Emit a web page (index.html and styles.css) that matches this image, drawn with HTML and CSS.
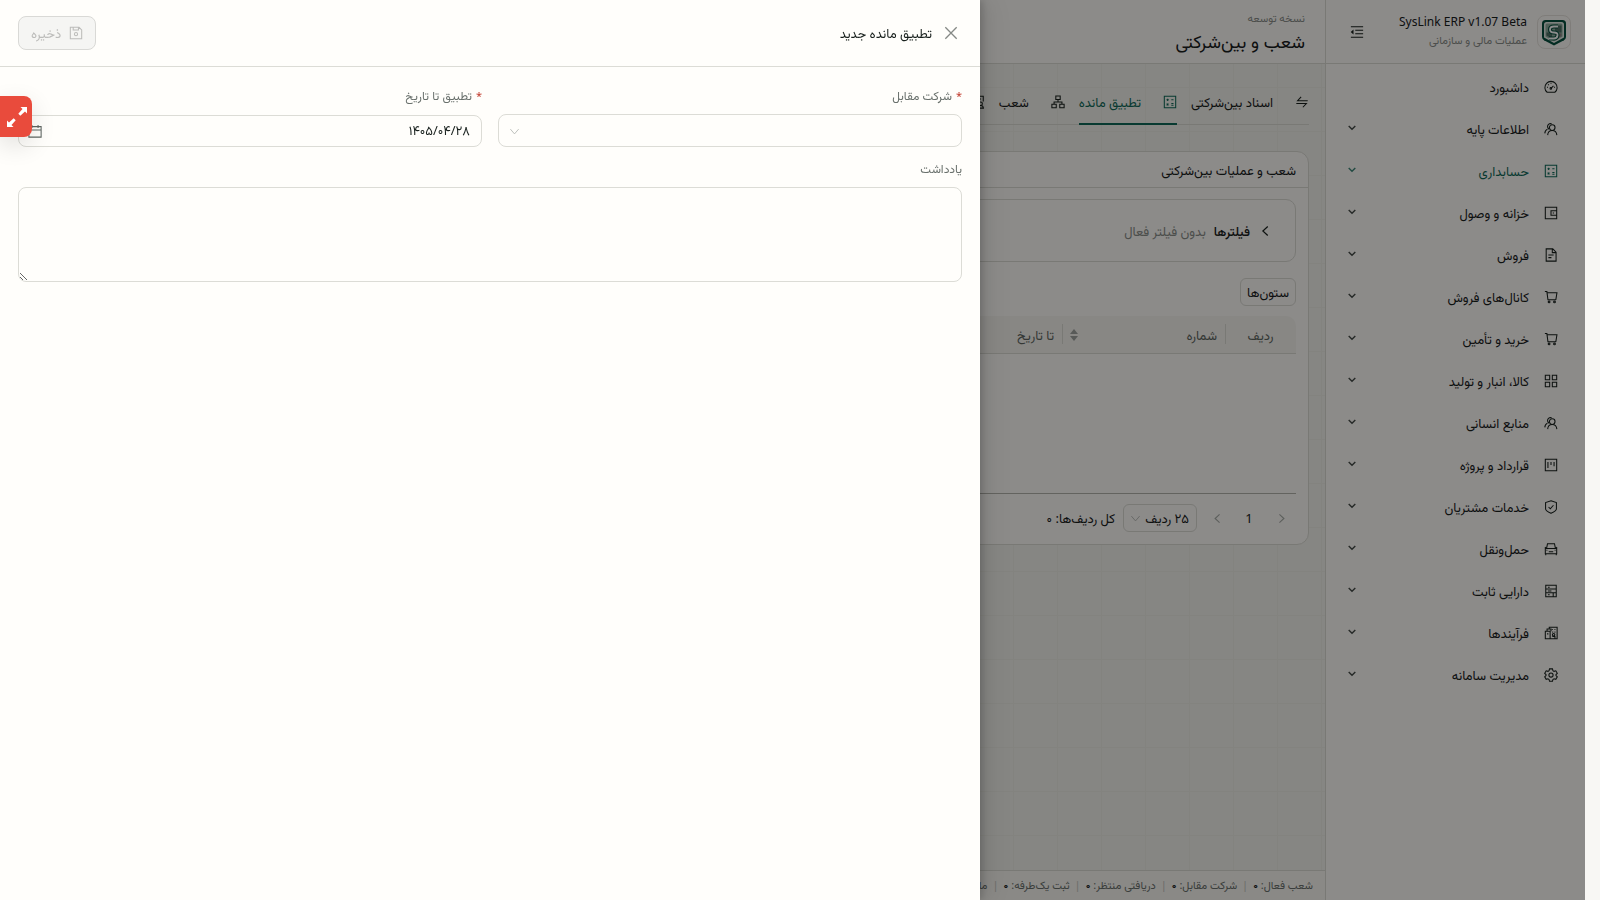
FILE: index.html
```
<!DOCTYPE html>
<html lang="fa" dir="rtl">
<head>
    <meta charset="UTF-8">
    <meta name="viewport" content="width=device-width, initial-scale=1.0">
    <title>شعب و بین‌شرکتی</title>
    <link rel="stylesheet" href="styles.css">
</head>
<body>
    <svg class="sprite" aria-hidden="true">
        <symbol id="i-dashboard" viewBox="0 0 16 16"><path d="M3.600 14a7 7 0 1 1 8.800 0z"/><path d="M8 9.500l2.800-2.800M8 3.200v1.200M3.400 8.300h1.200M11.400 8.300h1.200M4.700 5l.8.8"/><circle cx="7.800" cy="9.600" r=".9"/></symbol>
        <symbol id="i-team" viewBox="0 0 16 16"><circle cx="9.400" cy="6.400" r="3.200"/><path d="M4.200 15c.2-3.200 2-5.300 5.200-5.300s5 2.100 5.300 5.300M6 8.200A3.200 3.200 0 1 1 8.800 2.200M.9 13c.2-2.600 1.200-4.100 3-4.800"/></symbol>
        <symbol id="i-ledger" viewBox="0 0 16 16"><path d="M1.500 1.500h13v13h-13zM4 5.500h2.600M5.300 4.200v2.600M9.500 5.500H12M4.200 9.800l2 2M6.200 9.800l-2 2M9.500 9.800H12M9.500 11.800H12"/></symbol>
        <symbol id="i-wallet" viewBox="0 0 16 16"><path d="M1.500 1.500h13v13h-13zM14.500 5.500H8v5h6.500M10 8h1.500"/></symbol>
        <symbol id="i-file" viewBox="0 0 16 16"><path d="M2.500 1h7.500l3.800 3.800V15H2.500zM9.500 1v4.300h4.300M5 8h6M5 11h3.500"/></symbol>
        <symbol id="i-cart" viewBox="0 0 16 16"><path d="M1 1.800h2.300l1.200 9.400h9M3.500 3.200h11.300l-1.300 8"/><circle cx="5.800" cy="13.600" r="1"/><circle cx="12" cy="13.600" r="1"/></symbol>
        <symbol id="i-grid" viewBox="0 0 16 16"><path d="M1.500 1.500h5v5h-5zM9.500 1.500h5v5h-5zM1.500 9.500h5v5h-5zM9.500 9.500h5v5h-5z"/></symbol>
        <symbol id="i-project" viewBox="0 0 16 16"><path d="M1.500 1.500h13v13h-13zM4.500 4.500v7M8 4.500v3.500M11.500 4.500v5"/></symbol>
        <symbol id="i-shield" viewBox="0 0 16 16"><path d="M8 .9l6.200 2v7.300c0 1.500-3.200 3.600-6.200 5-3-1.400-6.200-3.500-6.200-5V2.900zM5.200 8l2 2 3.600-4"/></symbol>
        <symbol id="i-car" viewBox="0 0 16 16"><path d="M3 7l1-5h8l1 5M1.500 7.500h13v6h-13zM5.500 11.200h5M2.800 9.500h1M12.200 9.500h1M2 13.500V15M14 13.500V15M1 6l1.500 1M15 6l-1.500 1"/></symbol>
        <symbol id="i-asset" viewBox="0 0 16 16"><path d="M2 1.500h12v13H2zM2 5.800h12M2 10h7.500M4.500 3.700h2M4.500 8h4M4.500 12.200h2M9.500 10h4.500M10.500 10v4.500"/></symbol>
        <symbol id="i-building" viewBox="0 0 16 16"><path d="M6 3V1.500h9v13H1.500V6H7v8.500M3.500 6V3.500H8V6M9 4h1M12 4h1M9.500 7h1M12 7h1M9.500 12h3v2M3.500 9h1.500"/><circle cx="11" cy="10" r="1.400"/></symbol>
        <symbol id="i-gear" viewBox="0 0 16 16"><path d="M6.300 1h3.400l.5 2 1.300.8 2-.6 1.700 2.900-1.500 1.400v1.200l1.500 1.300-1.700 2.900-2-.6-1.300.8-.5 2H6.300l-.5-2-1.300-.8-2 .6L.8 10l1.500-1.300V7.500L.8 6.100l1.700-2.900 2 .6L5.800 3z"/><circle cx="8" cy="8" r="2.400"/></symbol>
        <symbol id="i-swap" viewBox="0 0 16 16"><path d="M14.500 6.500H3L7 2.200M1.500 9.700H13l-4 4.300"/></symbol>
        <symbol id="i-branches" viewBox="0 0 16 16"><path d="M5.500 1.200h5v4h-5zM1 10.500h5v4H1zM10 10.500h5v4h-5zM8 5.200v2.800M3.500 10.500V8h9v2.500"/></symbol>
        <symbol id="i-audit" viewBox="0 0 16 16"><path d="M7 14.500H2v-13h12v6M4.500 4.500h7M4.500 7.500h3"/><circle cx="11" cy="10" r="2"/><path d="M7.800 15c.3-2 1.500-3 3.200-3s3 1 3.200 3z"/></symbol>
        <symbol id="i-down" viewBox="0 0 16 16"><path d="M2 4.500l6 7 6-7"/></symbol>
        <symbol id="i-arrow" viewBox="0 0 8 6"><path d="M.7 1L4 4.300 7.300 1"/></symbol>
        <symbol id="i-prev" viewBox="0 0 16 16"><path d="M11 2L4.500 8l6.500 6"/></symbol>
        <symbol id="i-next" viewBox="0 0 16 16"><path d="M5 2l6.500 6L5 14"/></symbol>
        <symbol id="i-close" viewBox="0 0 16 16"><path d="M1.500 1.500l13 13M14.500 1.500l-13 13"/></symbol>
        <symbol id="i-save" viewBox="0 0 16 16"><path d="M1.500 1.500h10l3 3v10h-13zM4.800 1.500v3h6v-3"/><circle cx="8" cy="9.300" r="1.800"/></symbol>
        <symbol id="i-calendar" viewBox="0 0 16 16"><path d="M1 3h14v12H1zM1 6.800h14M4.500 1v3.600M11.500 1v3.600"/></symbol>
        <symbol id="i-fold" viewBox="0 0 16 16"><path d="M1 2h14M6 6h9M6 10h9M1 14h14"/><path class="solid" d="M4 5.200v5.600L.8 8z"/></symbol>
    </svg>

    <div class="app">
        <aside class="sidebar">
            <div class="brand">
                <span class="brand-logo">
                    <svg viewBox="0 0 32 32" width="32" height="32">
                        <path d="M7.500 4h17q3.500 0 3.500 3.500V21q0 2-2 3.200L16 29.500 6 24.200Q4 23 4 21V7.500Q4 4 7.500 4z" fill="#07503f"/>
                        <path d="M8.500 6h15q2.500 0 2.500 2.500v13L16 27 6 21.500v-13Q6 6 8.500 6z" fill="#e6ebe6"/>
                        <path d="M9 7.500h14q1.500 0 1.500 1.500v11.500L16 25.300l-8.500-4.800V9Q7.500 7.500 9 7.500z" fill="#8fae9f"/>
                        <path d="M17 9.500h6.500v7H17zM8.500 16.500H14v6l-5.500-3z" fill="#4e7065"/>
                        <path d="M17 17.500h6.500V20L17 24z" fill="#8c8080"/>
                        <path d="M20 10.500h-4q-4 0-4 3t4 3 3.500 3-3.500 3h-5" fill="none" stroke="#07503f" stroke-width="4"/>
                        <path d="M20 10.500h-4q-4 0-4 3t4 3 3.500 3-3.500 3h-5" fill="none" stroke="#ffffff" stroke-width="1.800"/>
                    </svg>
                </span>
                <div class="brand-text">
                    <strong>SysLink ERP v1.07 Beta</strong>
                    <small>عملیات مالی و سازمانی</small>
                </div>
                <button class="icon-btn" type="button" aria-label="جمع کردن منو"><svg class="icon"><use href="#i-fold"/></svg></button>
            </div>
            <nav class="menu">
                <a href="#"><svg class="icon"><use href="#i-dashboard"/></svg><span>داشبورد</span></a>
                <a href="#"><svg class="icon"><use href="#i-team"/></svg><span>اطلاعات پایه</span><svg class="arrow"><use href="#i-arrow"/></svg></a>
                <a href="#" class="active"><svg class="icon"><use href="#i-ledger"/></svg><span>حسابداری</span><svg class="arrow"><use href="#i-arrow"/></svg></a>
                <a href="#"><svg class="icon"><use href="#i-wallet"/></svg><span>خزانه و وصول</span><svg class="arrow"><use href="#i-arrow"/></svg></a>
                <a href="#"><svg class="icon"><use href="#i-file"/></svg><span>فروش</span><svg class="arrow"><use href="#i-arrow"/></svg></a>
                <a href="#"><svg class="icon"><use href="#i-cart"/></svg><span>کانال‌های فروش</span><svg class="arrow"><use href="#i-arrow"/></svg></a>
                <a href="#"><svg class="icon"><use href="#i-cart"/></svg><span>خرید و تأمین</span><svg class="arrow"><use href="#i-arrow"/></svg></a>
                <a href="#"><svg class="icon"><use href="#i-grid"/></svg><span>کالا، انبار و تولید</span><svg class="arrow"><use href="#i-arrow"/></svg></a>
                <a href="#"><svg class="icon"><use href="#i-team"/></svg><span>منابع انسانی</span><svg class="arrow"><use href="#i-arrow"/></svg></a>
                <a href="#"><svg class="icon"><use href="#i-project"/></svg><span>قرارداد و پروژه</span><svg class="arrow"><use href="#i-arrow"/></svg></a>
                <a href="#"><svg class="icon"><use href="#i-shield"/></svg><span>خدمات مشتریان</span><svg class="arrow"><use href="#i-arrow"/></svg></a>
                <a href="#"><svg class="icon"><use href="#i-car"/></svg><span>حمل‌ونقل</span><svg class="arrow"><use href="#i-arrow"/></svg></a>
                <a href="#"><svg class="icon"><use href="#i-asset"/></svg><span>دارایی ثابت</span><svg class="arrow"><use href="#i-arrow"/></svg></a>
                <a href="#"><svg class="icon"><use href="#i-building"/></svg><span>فرآیندها</span><svg class="arrow"><use href="#i-arrow"/></svg></a>
                <a href="#"><svg class="icon"><use href="#i-gear"/></svg><span>مدیریت سامانه</span><svg class="arrow"><use href="#i-arrow"/></svg></a>
            </nav>
        </aside>

        <div class="main">
            <header class="topbar">
                <small>نسخه توسعه</small>
                <h1>شعب و بین‌شرکتی</h1>
            </header>

            <main class="content">
                <nav class="tabs">
                    <a href="#"><svg class="icon"><use href="#i-swap"/></svg><span>اسناد بین‌شرکتی</span></a>
                    <a href="#" class="active"><svg class="icon"><use href="#i-ledger"/></svg><span>تطبیق مانده</span></a>
                    <a href="#"><svg class="icon"><use href="#i-branches"/></svg><span>شعب</span></a>
                    <a href="#" aria-label="مانده"><svg class="icon"><use href="#i-audit"/></svg></a>
                </nav>

                <section class="card">
                    <h2>شعب و عملیات بین‌شرکتی</h2>
                    <div class="card-body">
                        <div class="filters">
                            <svg class="icon"><use href="#i-prev"/></svg>
                            <strong>فیلترها</strong>
                            <span>بدون فیلتر فعال</span>
                        </div>
                        <button class="btn-small" type="button">ستون‌ها</button>
                        <table class="grid">
                            <colgroup>
                                <col class="col-row">
                                <col class="col-number">
                                <col>
                            </colgroup>
                            <thead>
                                <tr>
                                    <th class="center">ردیف</th>
                                    <th><span class="th-inner">شماره<svg class="sorter" viewBox="0 0 8 14"><path d="M4 1l4 5H0zM4 13L0 8h8z"/></svg></span></th>
                                    <th>تا تاریخ</th>
                                </tr>
                            </thead>
                            <tbody>
                                <tr><td colspan="3"></td></tr>
                            </tbody>
                        </table>
                        <div class="pagination">
                            <button type="button" aria-label="صفحه قبل" disabled><svg class="icon"><use href="#i-next"/></svg></button>
                            <button type="button">1</button>
                            <button type="button" aria-label="صفحه بعد" disabled><svg class="icon"><use href="#i-prev"/></svg></button>
                            <div class="select-wrap page-size">
                                <select aria-label="تعداد ردیف">
                                    <option>۲۵ ردیف</option>
                                </select>
                                <svg class="caret"><use href="#i-down"/></svg>
                            </div>
                            <span>کل ردیف‌ها: ۰</span>
                        </div>
                    </div>
                </section>
            </main>

            <footer class="statusbar">
                <span>شعب فعال: <b>۰</b></span>
                <span>شرکت مقابل: <b>۰</b></span>
                <span>دریافتی منتظر: <b>۰</b></span>
                <span>ثبت یک‌طرفه: <b>۰</b></span>
                <span>مانده: <b>۰</b></span>
            </footer>
        </div>
        <div class="mask"></div>
    </div>

    <div class="drawer" role="dialog" aria-labelledby="drawerTitle">
        <header class="drawer-header">
            <button class="icon-btn" type="button" aria-label="بستن"><svg class="icon"><use href="#i-close"/></svg></button>
            <h2 id="drawerTitle">تطبیق مانده جدید</h2>
            <button class="btn-save" type="button" disabled><svg class="icon"><use href="#i-save"/></svg>ذخیره</button>
        </header>
        <form class="drawer-body">
            <div class="form-row">
                <div class="field">
                    <label class="required" for="company">شرکت مقابل</label>
                    <div class="select-wrap">
                        <select id="company">
                            <option value=""></option>
                        </select>
                        <svg class="caret"><use href="#i-down"/></svg>
                    </div>
                </div>
                <div class="field">
                    <label class="required" for="untilDate">تطبیق تا تاریخ</label>
                    <div class="date-box">
                        <input type="text" id="untilDate" value="۱۴۰۵/۰۴/۲۸">
                        <svg class="icon"><use href="#i-calendar"/></svg>
                    </div>
                </div>
            </div>
            <div class="field">
                <label for="note">یادداشت</label>
                <textarea id="note"></textarea>
            </div>
        </form>
    </div>

    <button class="expand-btn" type="button" aria-label="تمام صفحه">
        <svg viewBox="0 0 20 20" width="20" height="20"><path d="M13.500 0H20v6.500l-2-2-4.700 4.300-2-2L15.500 2zM0 13.500l2 2 4.700-4.300 2 2L4.500 18l2 2H0z"/></svg>
    </button>
</body>
</html>
```
FILE: styles.css
```
* {
    box-sizing: border-box;
}
body {
    margin: 0;
    padding-right: 15px;
    background: #f8f7f4;
    color: #18201d;
    font-family: "Noto Sans", Vazirmatn, sans-serif;
    font-size: 13px;
    line-height: 20px;
}
button, input, select, textarea {
    font: inherit;
    color: inherit;
}
a {
    color: inherit;
    text-decoration: none;
}
h1, h2, strong, b {
    margin: 0;
    font-weight: 400;
}
.sprite {
    position: absolute;
    width: 0;
    height: 0;
}
.icon, .arrow, .caret, .sprite {
    fill: none;
    stroke: currentColor;
    stroke-width: 1.2;
}
.icon {
    width: 14px;
    height: 14px;
    flex: none;
}
.solid {
    fill: currentColor;
    stroke: none;
}
.icon-btn {
    display: flex;
    padding: 0;
    border: 0;
    background: none;
}

/* app shell */
.app {
    position: relative;
    display: flex;
    height: 100vh;
    overflow: hidden;
}
.mask {
    position: absolute;
    inset: 0;
    background: rgba(0, 0, 0, 0.45);
}
.sidebar {
    flex: none;
    width: 260px;
    background: #fffdf9;
    border-left: 1px solid #dcdcd6;
}
.brand {
    display: flex;
    align-items: center;
    gap: 10px;
    height: 64px;
    padding: 0 14px 0 24px;
    border-bottom: 1px solid #dcdcd6;
}
.brand-logo {
    display: flex;
    border: 1px solid #e8e4de;
    border-radius: 8px;
}
.brand-text {
    display: flex;
    flex: 1;
    flex-direction: column;
    padding-bottom: 2px;
}
.brand-text strong {
    font-size: 12px;
    line-height: 18px;
    text-align: right;
}
.brand-text small, .topbar small {
    color: #8a8e8a;
    font-size: 11px;
    line-height: 18px;
}
.menu {
    padding-top: 2px;
}
.menu a {
    display: flex;
    align-items: center;
    gap: 15px;
    height: 42px;
    padding: 0 27px 0 22px;
}
.menu span {
    flex: 1;
}
.menu .active, .tabs .active {
    color: #0f6b5a;
}
.arrow {
    width: 8px;
    height: 6px;
    margin-bottom: 3px;
    stroke-width: 1.4;
    opacity: 0.8;
}

/* main column */
.main {
    display: flex;
    flex: 1;
    flex-direction: column;
    min-width: 0;
}
.topbar {
    display: flex;
    flex-direction: column;
    justify-content: center;
    height: 64px;
    padding: 0 20px;
    background: #fffdf9;
    border-bottom: 1px solid #dcdcd6;
}
.topbar h1 {
    font-size: 18px;
    line-height: 28px;
}
.content {
    flex: 1;
    padding: 16px;
    background-color: #f5f4ee;
    background-image:
        linear-gradient(90deg, #efeee8 1px, transparent 1px),
        linear-gradient(#efeee8 1px, transparent 1px);
    background-size: 44px 44px;
    background-position: 1px 23px;
}
.tabs {
    display: flex;
    gap: 14px;
    height: 45px;
    border-bottom: 1px solid #dcdcd6;
}
.tabs a {
    display: flex;
    align-items: center;
    gap: 22px;
    height: 45px;
    border-bottom: 2px solid transparent;
}
.tabs .active {
    border-bottom-color: #0f6b5a;
}
.card {
    margin-top: 26px;
    background: #fffdf9;
    border: 1px solid #dcdcd6;
    border-radius: 12px;
}
.card h2 {
    padding: 8px 12px 7px;
    border-bottom: 1px solid #dcdcd6;
    font-size: 13px;
    line-height: 20px;
}
.card-body {
    padding: 11px 12px 12px;
}
.filters {
    display: flex;
    align-items: center;
    gap: 8px;
    height: 63px;
    padding: 0 22px;
    border: 1px solid #dcdcd6;
    border-radius: 10px;
}
.filters .icon {
    width: 15px;
    height: 12px;
    stroke-width: 1.6;
}
.filters strong {
    font-weight: 500;
}
.filters span {
    color: #8a8e8a;
}
.btn-small {
    display: block;
    height: 28px;
    margin: 16px 0 10px;
    padding: 0 6px;
    background: none;
    border: 1px solid #dcdcd6;
    border-radius: 6px;
}
.grid {
    width: 100%;
    table-layout: fixed;
    border-spacing: 0;
}
.col-row {
    width: 71px;
}
.col-number {
    width: 163px;
}
.grid th {
    position: relative;
    height: 38px;
    padding: 0 8px;
    background: #f7f6f1;
    border-bottom: 1px solid #dcdcd6;
    color: #5f6662;
    font-weight: 400;
    text-align: right;
}
.grid th:first-child {
    border-top-right-radius: 10px;
}
.grid th.center {
    text-align: center;
}
.grid th:not(:last-child)::after {
    content: "";
    position: absolute;
    top: 8px;
    left: 0;
    width: 1px;
    height: 20px;
    background: #dcdcd6;
}
.th-inner {
    display: flex;
    align-items: center;
    justify-content: space-between;
}
.sorter {
    width: 8px;
    height: 14px;
    fill: #a0a4a0;
}
.grid td {
    height: 140px;
    border-bottom: 1px solid #b4b4ae;
}
.pagination {
    display: flex;
    align-items: center;
    gap: 8px;
    padding: 10px 3px 0;
}
.pagination button {
    display: flex;
    align-items: center;
    justify-content: center;
    width: 24px;
    height: 28px;
    padding: 0;
    border: 0;
    background: none;
}
.pagination button:disabled {
    color: #a8aca8;
}
.pagination .icon {
    width: 11px;
    height: 11px;
    stroke-width: 1.6;
}
.statusbar {
    display: flex;
    height: 30px;
    padding: 0 12px;
    background: #fbfaf5;
    border-top: 1px solid #dcdcd6;
    color: #6b716d;
    font-size: 11px;
    line-height: 28px;
    white-space: nowrap;
}
.statusbar b {
    color: #18201d;
    font-weight: 500;
}
.statusbar span + span::before {
    content: "|";
    margin: 0 5px;
    color: #c4c4be;
}

/* form controls */
.select-wrap, .date-box {
    position: relative;
}
select, input, textarea {
    display: block;
    width: 100%;
    background: #fffefb;
    border: 1px solid #dcdcd6;
    border-radius: 8px;
    outline: none;
}
select {
    appearance: none;
    height: 33px;
    padding: 0 11px;
}
.caret {
    position: absolute;
    top: 50%;
    left: 11px;
    width: 11px;
    height: 11px;
    margin-top: -5px;
    color: #b0b4b0;
}
.page-size {
    width: 74px;
}
.page-size select {
    height: 28px;
    padding: 0 7px;
    background: none;
    border-radius: 6px;
}
.page-size .caret {
    left: 7px;
}

/* drawer */
.drawer {
    position: fixed;
    top: 0;
    bottom: 0;
    left: 0;
    width: 980px;
    max-width: 100%;
    background: #fffefb;
    box-shadow: 6px 0 16px rgba(0, 0, 0, 0.08), 3px 0 6px rgba(0, 0, 0, 0.12), 9px 0 28px rgba(0, 0, 0, 0.05);
}
.drawer-header {
    display: flex;
    align-items: center;
    gap: 8px;
    height: 67px;
    padding: 0 18px;
    border-bottom: 1px solid #dcdcd6;
}
.drawer-header .icon-btn {
    padding: 4px;
    color: #858985;
}
.drawer-header .icon-btn .icon {
    stroke-width: 1.5;
}
.drawer-header h2 {
    flex: 1;
    font-size: 13px;
    line-height: 20px;
}
.btn-save {
    display: flex;
    align-items: center;
    gap: 8px;
    height: 34px;
    padding: 0 12px;
    background: #f5f5f3;
    border: 1px solid #d9d9d6;
    border-radius: 8px;
    color: #bcbcba;
}
.drawer-body {
    display: flex;
    flex-direction: column;
    gap: 12px;
    padding: 19px 18px 18px;
}
.form-row {
    display: flex;
    gap: 16px;
}
.field {
    flex: 1;
}
.field label {
    display: block;
    margin-bottom: 8px;
    color: #69706c;
    font-size: 12px;
    line-height: 20px;
}
.required::before {
    content: "*";
    margin-left: 4px;
    color: #c0392b;
    font-size: 11px;
}
.date-box {
    padding-top: 1px;
}
.date-box input {
    height: 32px;
    padding: 0 11px;
}
.date-box .icon {
    position: absolute;
    top: 10px;
    left: 10px;
    color: #5f6662;
}
textarea {
    height: 95px;
    padding: 6px 11px;
    resize: vertical;
}

.expand-btn {
    position: fixed;
    top: 96px;
    left: 0;
    display: flex;
    align-items: center;
    justify-content: center;
    width: 32px;
    height: 41px;
    padding: 0 0 0 1px;
    background: #e94b3c;
    border: 0;
    border-radius: 0 8px 8px 0;
    box-shadow: 0 8px 24px rgba(0, 0, 0, 0.12);
}
.expand-btn svg {
    fill: #fff;
}
```
